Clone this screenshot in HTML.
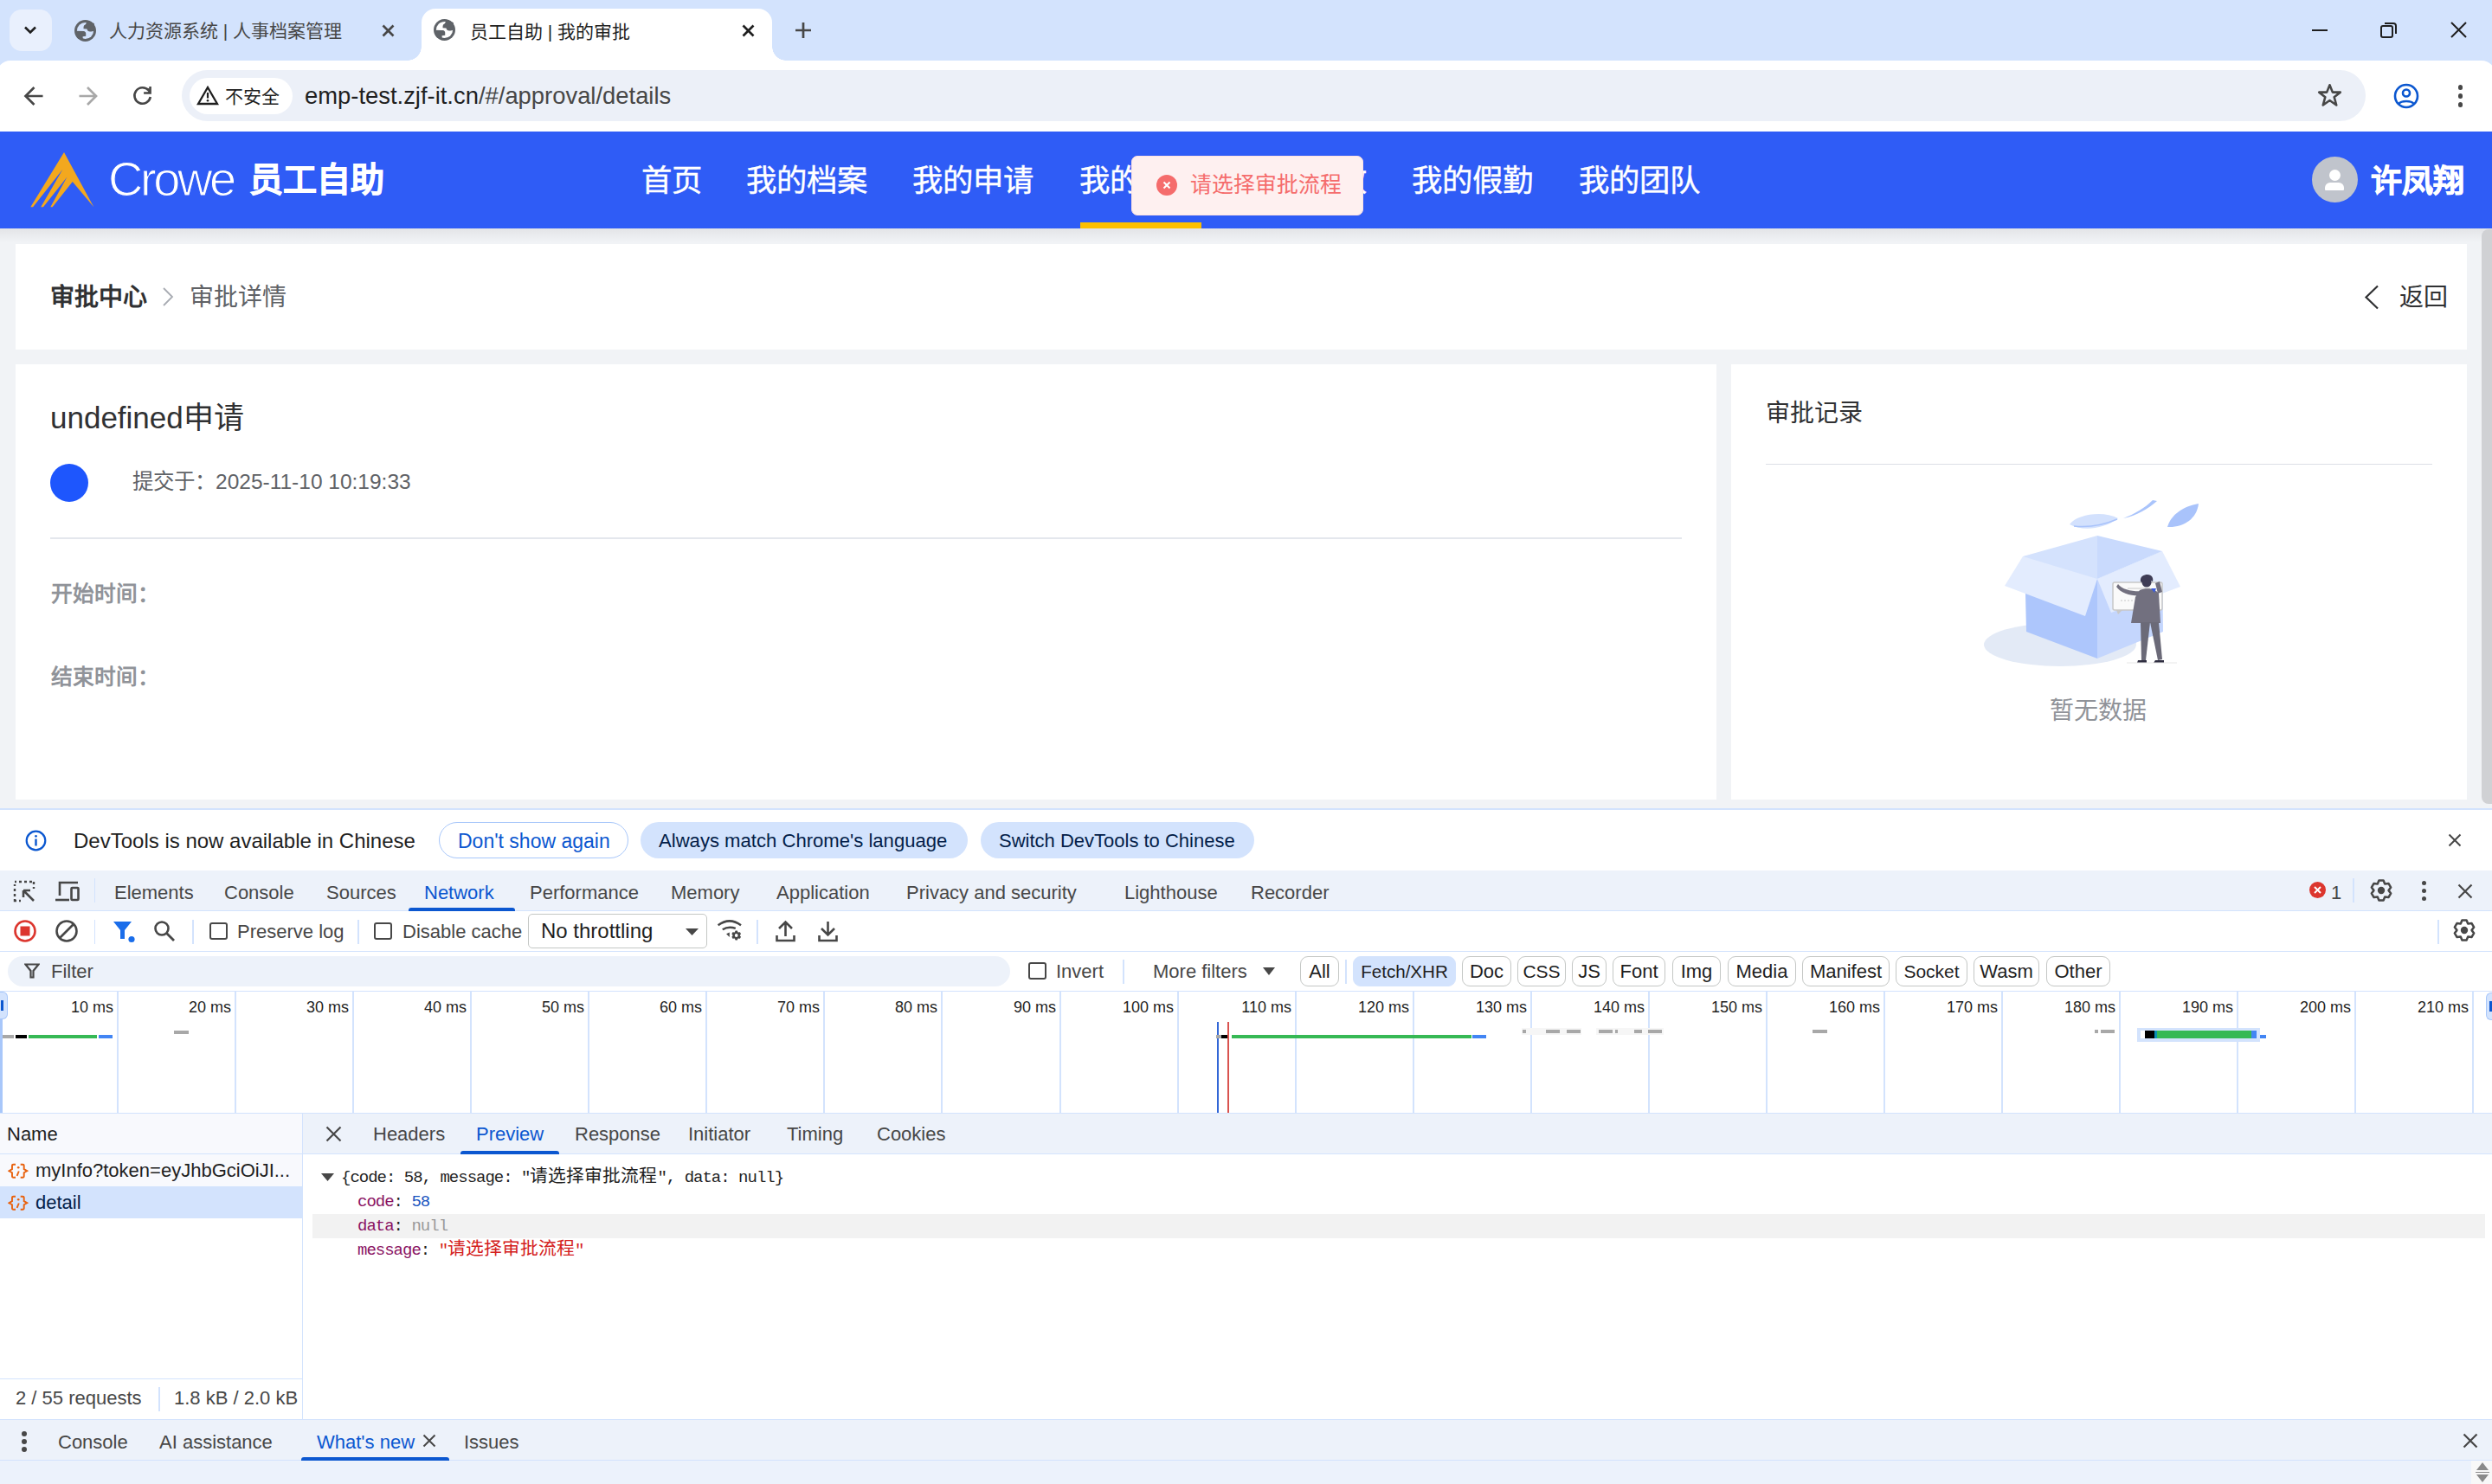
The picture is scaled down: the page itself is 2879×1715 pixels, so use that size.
<!DOCTYPE html>
<html lang="zh-CN">
<head>
<meta charset="utf-8">
<style>
*{box-sizing:border-box;margin:0;padding:0}
html,body{width:2879px;height:1715px;overflow:hidden;background:#fff}
body{font-family:"Liberation Sans",sans-serif;position:relative;color:#1f1f1f}
.a{position:absolute}
.nw{white-space:nowrap}
svg{display:block}
.dt{font-size:22px;line-height:30px;color:#474747}
.cb{width:21px;height:20px;border:2px solid #474747;border-radius:3px}
.chip{top:1105px;height:35px;border:1px solid #c4c7c5;border-radius:9px;font-size:22px;line-height:33px;color:#1f1f1f;text-align:center;white-space:nowrap}
.mono{font-family:"Liberation Mono",monospace;font-size:19px;letter-spacing:-1px;line-height:28px;color:#1f1f1f}
.cj{font-size:20.8px;letter-spacing:0}
.tl{top:1152px;font-size:18px;line-height:24px;color:#1f1f1f}
</style>
</head>
<body>
<!-- ============ TAB STRIP ============ -->
<div class="a" style="left:0;top:0;width:2879px;height:90px;background:#d3e3fd"></div>
<div class="a" style="left:11px;top:11px;width:49px;height:48px;border-radius:14px;background:#e9f0fd"></div>
<svg class="a" style="left:27px;top:29px" width="16" height="12" viewBox="0 0 16 12"><path d="M2 2.5 L8 8.5 L14 2.5" fill="none" stroke="#1f1f1f" stroke-width="2.6"/></svg>

<!-- inactive tab -->
<svg class="a" style="left:86px;top:23px" width="25" height="25" viewBox="0 0 24 24"><circle cx="12" cy="12" r="12" fill="#5f6368"/><circle cx="12" cy="12" r="9.2" fill="#d3e3fd"/><path d="M13.9 1.5 C13 4.3 12.6 5.1 11.6 5.5 C10.3 6 10.1 7.2 10.1 9.8 L13.9 10 C14.2 11.6 15.4 12.9 17.3 12.9 C19 12.9 20.6 12.4 22 11.9 L22 4 L16 1Z" fill="#5f6368"/><path d="M1.5 12.3 L10.2 12.4 C11.8 12.6 12.7 13.8 12.7 15 L12.7 17.9 L9.2 18.4 L9.4 22.5 L3 20 L1 15Z" fill="#5f6368"/></svg>
<div class="a nw" style="left:126px;top:21px;font-size:21px;line-height:30px;color:#474747">人力资源系统 | 人事档案管理</div>
<svg class="a" style="left:441px;top:28px" width="15" height="15" viewBox="0 0 15 15"><path d="M1.5 1.5L13.5 13.5M13.5 1.5L1.5 13.5" stroke="#474747" stroke-width="2.7"/></svg>

<!-- active tab -->
<div class="a" style="left:487px;top:10px;width:405px;height:62px;background:#fff;border-radius:16px 16px 0 0"></div>
<div class="a" style="left:471px;top:54px;width:16px;height:16px;background:radial-gradient(circle at 0 0,#d3e3fd 15.5px,#fff 16px)"></div>
<div class="a" style="left:892px;top:54px;width:16px;height:16px;background:radial-gradient(circle at 100% 0,#d3e3fd 15.5px,#fff 16px)"></div>
<svg class="a" style="left:501px;top:22px" width="25" height="25" viewBox="0 0 24 24"><circle cx="12" cy="12" r="12" fill="#5f6368"/><circle cx="12" cy="12" r="9.2" fill="#fff"/><path d="M13.9 1.5 C13 4.3 12.6 5.1 11.6 5.5 C10.3 6 10.1 7.2 10.1 9.8 L13.9 10 C14.2 11.6 15.4 12.9 17.3 12.9 C19 12.9 20.6 12.4 22 11.9 L22 4 L16 1Z" fill="#5f6368"/><path d="M1.5 12.3 L10.2 12.4 C11.8 12.6 12.7 13.8 12.7 15 L12.7 17.9 L9.2 18.4 L9.4 22.5 L3 20 L1 15Z" fill="#5f6368"/></svg>
<div class="a nw" style="left:543px;top:21.5px;font-size:21px;line-height:30px;color:#1f1f1f">员工自助 | 我的审批</div>
<svg class="a" style="left:857px;top:28px" width="15" height="15" viewBox="0 0 15 15"><path d="M1.5 1.5L13.5 13.5M13.5 1.5L1.5 13.5" stroke="#1f1f1f" stroke-width="2.7"/></svg>
<svg class="a" style="left:918px;top:25px" width="20" height="20" viewBox="0 0 20 20"><path d="M10 1V19M1 10H19" stroke="#474747" stroke-width="2.7"/></svg>

<!-- window controls -->
<div class="a" style="left:2671px;top:34px;width:18px;height:2px;background:#1f1f1f"></div>
<svg class="a" style="left:2750px;top:25px" width="20" height="19" viewBox="0 0 20 19"><rect x="1" y="5" width="13" height="13" rx="2" fill="none" stroke="#1f1f1f" stroke-width="2"/><path d="M5 2 H15 A3 3 0 0 1 18 5 V14" fill="none" stroke="#1f1f1f" stroke-width="2"/></svg>
<svg class="a" style="left:2831px;top:25px" width="19" height="19" viewBox="0 0 19 19"><path d="M1 1L18 18M18 1L1 18" stroke="#1f1f1f" stroke-width="2"/></svg>

<!-- ============ TOOLBAR ============ -->
<div class="a" style="left:-4px;top:70px;width:2887px;height:82px;background:#fff;border-radius:16px 16px 0 0"></div>

<svg class="a" style="left:27px;top:99px" width="24" height="24" viewBox="0 0 24 24"><path d="M22.5 12H4M12.5 2 L2.5 12 L12.5 22" fill="none" stroke="#474747" stroke-width="2.7"/></svg>
<svg class="a" style="left:90px;top:99px" width="24" height="24" viewBox="0 0 24 24"><path d="M1.5 12H20M11 2 L21 12 L11 22" fill="none" stroke="#a8a8a8" stroke-width="2.7"/></svg>
<svg class="a" style="left:153px;top:99px" width="24" height="24" viewBox="0 0 24 24"><path d="M18.75 5.5 A9.25 9.25 0 1 0 20.77 13.06" fill="none" stroke="#474747" stroke-width="2.6"/><path d="M13.1 7.2 H17.6 L19.3 4.8 V1.1 H21.85 V9.75 H13.1Z" fill="#474747"/><path d="M17 4 L19.6 2.5 L19.6 8 Z" fill="#474747"/></svg>

<div class="a" style="left:210px;top:81px;width:2523px;height:59px;border-radius:30px;background:#ecf0f8"></div>
<div class="a" style="left:219px;top:90px;width:119px;height:42px;border-radius:21px;background:#fff"></div>
<svg class="a" style="left:227px;top:99px" width="26" height="23" viewBox="0 0 26 23"><path d="M13 2L24 21H2Z" fill="none" stroke="#1f1f1f" stroke-width="2.3" stroke-linejoin="miter"/><path d="M13 8V14.5" stroke="#1f1f1f" stroke-width="2.2"/><circle cx="13" cy="17.3" r="1.3" fill="#1f1f1f"/></svg>
<div class="a nw" style="left:260px;top:97px;font-size:21px;line-height:30px;color:#1f1f1f">不安全</div>
<div class="a nw" style="left:352px;top:93px;font-size:27.4px;line-height:36px;color:#1f1f1f">emp-test.zjf-it.cn<span style="color:#474747">/#/approval/details</span></div>
<svg class="a" style="left:2676px;top:95px" width="31" height="31" viewBox="0 0 24 24"><path d="M12 2.5L14.6 9H21.5L16 13.3L18 20.5L12 16.3L6 20.5L8 13.3L2.5 9H9.4Z" fill="none" stroke="#474747" stroke-width="2" stroke-linejoin="round"/></svg>
<svg class="a" style="left:2765px;top:96px" width="30" height="30" viewBox="0 0 30 30"><circle cx="15" cy="15" r="13" fill="none" stroke="#0b57d0" stroke-width="2.6"/><circle cx="15" cy="11.5" r="4" fill="none" stroke="#0b57d0" stroke-width="2.6"/><path d="M6.5 24C9 20 21 20 23.5 24" fill="none" stroke="#0b57d0" stroke-width="2.6"/></svg>
<div class="a" style="left:2839.7px;top:98.2px;width:5.5px;height:5.5px;border-radius:3px;background:#474747"></div>
<div class="a" style="left:2839.7px;top:108.2px;width:5.5px;height:5.5px;border-radius:3px;background:#474747"></div>
<div class="a" style="left:2839.7px;top:118.2px;width:5.5px;height:5.5px;border-radius:3px;background:#474747"></div>

<!-- PAGE_START -->
<!-- ============ HEADER ============ -->
<div class="a" style="left:0;top:152px;width:2879px;height:112px;background:#2f5cf6"></div>
<div class="a" style="left:0;top:264px;width:2879px;height:671px;background:#f1f3f6"></div>
<div class="a" style="left:0;top:264px;width:2879px;height:16px;background:linear-gradient(#e3e4e7,#f1f3f6)"></div>
<!-- logo -->
<svg class="a" style="left:30px;top:170px" width="85" height="75" viewBox="0 0 85 75"><path d="M44 6.1 L78.3 69.2 L53.8 39.9 L30.6 69.2 L28.3 69.2 L47.5 34.4 L20 69.2 L17.2 69.2 L42.4 25.8 L8.1 69.2 L5.3 69.2Z" fill="#f3a81e"/></svg>
<div class="a nw" style="left:125px;top:175px;font-size:56px;line-height:64px;color:#fff;letter-spacing:-3.4px;-webkit-text-stroke:1.1px #2f5cf6">Crowe</div>
<div class="a nw" style="left:288px;top:182px;font-size:39px;line-height:52px;color:#fff;font-weight:900;-webkit-text-stroke:0.8px #fff">员工自助</div>
<!-- nav -->
<div class="a nw" style="left:741px;top:184px;font-size:35.4px;line-height:50px;color:#fff;-webkit-text-stroke:0.4px #fff">首页</div>
<div class="a nw" style="left:862px;top:184px;font-size:35.4px;line-height:50px;color:#fff;-webkit-text-stroke:0.4px #fff">我的档案</div>
<div class="a nw" style="left:1054px;top:184px;font-size:35.4px;line-height:50px;color:#fff;-webkit-text-stroke:0.4px #fff">我的申请</div>
<div class="a nw" style="left:1247px;top:184px;font-size:35.4px;line-height:50px;color:#fff;-webkit-text-stroke:0.4px #fff">我的审批</div>
<div class="a nw" style="left:1439px;top:184px;font-size:35.4px;line-height:50px;color:#fff;-webkit-text-stroke:0.4px #fff">我的绩效</div>
<div class="a nw" style="left:1631px;top:184px;font-size:35.4px;line-height:50px;color:#fff;-webkit-text-stroke:0.4px #fff">我的假勤</div>
<div class="a nw" style="left:1824px;top:184px;font-size:35.4px;line-height:50px;color:#fff;-webkit-text-stroke:0.4px #fff">我的团队</div>
<div class="a" style="left:1248px;top:257px;width:140px;height:7px;background:#fcbf00"></div>
<!-- avatar -->
<div class="a" style="left:2671px;top:181px;width:53px;height:53px;border-radius:50%;background:#c0c4cc"></div>
<div class="a" style="left:2691px;top:196px;width:13px;height:13px;border-radius:50%;background:#fff"></div>
<div class="a" style="left:2686px;top:211px;width:22px;height:9px;border-radius:6px 6px 1px 1px;background:#fff"></div>
<div class="a nw" style="left:2739px;top:185px;font-size:36px;line-height:50px;color:#fff;font-weight:900;-webkit-text-stroke:0.8px #fff">许凤翔</div>
<!-- toast -->
<div class="a" style="left:1307px;top:180px;width:268px;height:69px;border-radius:7px;background:#fef0f0;border:1px solid #fde2e2"></div>
<div class="a" style="left:1336px;top:202px;width:24px;height:24px;border-radius:50%;background:#f56c6c"></div>
<svg class="a" style="left:1336px;top:202px" width="24" height="24" viewBox="0 0 24 24"><path d="M8.5 8.5L15.5 15.5M15.5 8.5L8.5 15.5" stroke="#fff" stroke-width="2"/></svg>
<div class="a nw" style="left:1375px;top:197px;font-size:24.8px;line-height:34px;color:#f56c6c">请选择审批流程</div>

<!-- ============ PAGE ============ -->
<div class="a" style="left:18px;top:282px;width:2832px;height:122px;background:#fff"></div>
<div class="a nw" style="left:58px;top:325px;font-size:28px;line-height:38px;color:#303133;font-weight:bold">审批中心</div>
<svg class="a" style="left:187px;top:332px" width="14" height="22" viewBox="0 0 14 22"><path d="M2 1L12 11L2 21" fill="none" stroke="#a8abb2" stroke-width="1.8"/></svg>
<div class="a nw" style="left:219px;top:325px;font-size:28px;line-height:38px;color:#606266">审批详情</div>
<svg class="a" style="left:2731px;top:329px" width="18" height="29" viewBox="0 0 18 29"><path d="M16 1.5L2.5 14.5L16 27.5" fill="none" stroke="#303133" stroke-width="2.2"/></svg>
<div class="a nw" style="left:2772px;top:325px;font-size:28px;line-height:38px;color:#303133">返回</div>

<div class="a" style="left:18px;top:421px;width:1965px;height:503px;background:#fff"></div>
<div class="a nw" style="left:58px;top:460.5px;font-size:35px;line-height:44px;color:#303133">undefined申请</div>
<div class="a" style="left:58px;top:536px;width:44px;height:44px;border-radius:50%;background:#1e56fd"></div>
<div class="a nw" style="left:153px;top:540px;font-size:24.5px;line-height:34px;color:#606266">提交于：2025-11-10 10:19:33</div>
<div class="a" style="left:58px;top:621px;width:1885px;height:2px;background:#e4e7ed"></div>
<div class="a nw" style="left:59px;top:670px;font-size:24.7px;line-height:34px;color:#909399;font-weight:bold">开始时间：</div>
<div class="a nw" style="left:59px;top:766px;font-size:24.7px;line-height:34px;color:#909399;font-weight:bold">结束时间：</div>

<div class="a" style="left:2000px;top:421px;width:850px;height:503px;background:#fff"></div>
<div class="a nw" style="left:2040px;top:459px;font-size:28px;line-height:38px;color:#303133">审批记录</div>
<div class="a" style="left:2040px;top:536px;width:770px;height:1px;background:#dcdfe6"></div>
<svg class="a" style="left:2280px;top:570px" width="280" height="210" viewBox="2280 570 280 210">
<ellipse cx="2380" cy="745" rx="88" ry="25" fill="#e3eaf6"/>
<path d="M2340 686 L2423 669 L2423 761 L2341 730Z" fill="#adc6fc"/>
<path d="M2423 669 L2498 637 L2499 730 L2423 761Z" fill="#c4d6fd"/>
<path d="M2337 643 L2423 619 L2423 669 L2340 686Z" fill="#d4e2fd"/>
<path d="M2423 619 L2498 637 L2423 669Z" fill="#c9dafd"/>
<path d="M2337 643 L2423 669 L2409 712 L2316 677Z" fill="#e3ecfe"/>
<path d="M2423 669 L2498 637 L2519 678 L2439 708Z" fill="#e3ecfe"/>
<path d="M2391 606 C2400 594 2430 590 2447 599 C2430 612 2405 614 2391 606Z" fill="#d3e1fd"/>
<path d="M2396 608 C2415 610 2432 606 2446 600" fill="none" stroke="#a9c3fb" stroke-width="1.5"/>
<path d="M2453 599 C2466 594 2478 587 2487 578 L2492 579 C2482 588 2468 596 2453 599Z" fill="#aac4fb"/>
<path d="M2504 609 C2508 595 2522 585 2540 582 C2538 600 2522 610 2504 609Z" fill="#a9c3fb"/>
<rect x="2441" y="673" width="57" height="32" rx="2" fill="#fafafa" stroke="#c8c8c8" stroke-width="1.5"/>
<path d="M2445 705 L2447 710 L2452 705Z" fill="#c8c8c8"/>
<path d="M2458 680 H2484" stroke="#d8d8d8" stroke-width="1.5"/>
<path d="M2450 694 H2464" stroke="#d8d8d8" stroke-width="1.5" stroke-dasharray="2 2"/>
<path d="M2447 675 C2452 682 2465 684 2477 683 L2477 688 C2465 690 2450 686 2445 678Z" fill="#72707f"/>
<path d="M2472 682 C2480 679 2490 680 2494 686 L2496 720 L2462 720 L2467 690Z" fill="#72707f"/>
<path d="M2495 672 L2498 684 L2493 686 L2490 674Z" fill="#72707f"/>
<circle cx="2480" cy="673" r="5.5" fill="#3f3d56"/><path d="M2473 672 C2472 666 2477 664 2481 664 C2486 664 2488 668 2487 672 L2483 670 C2480 669 2477 670 2476 674Z" fill="#3f3d56"/>
<path d="M2485 680 L2491 680 L2489 685Z" fill="#3b5bdb"/>
<path d="M2473 719 L2484 719 L2479 763 L2474 763Z" fill="#6b6a78"/>
<path d="M2484 719 L2494 719 L2498 762 L2493 763Z" fill="#6b6a78"/>
<path d="M2470 763 H2480 V766 H2469Z" fill="#2f2e41"/>
<path d="M2490 763 H2500 V766 H2488Z" fill="#2f2e41"/>
<path d="M2457 766 H2515" stroke="#e6e6e6" stroke-width="1"/>
</svg>
<div class="a nw" style="left:2368px;top:803px;font-size:28px;line-height:38px;color:#909399">暂无数据</div>
<!-- page scrollbar -->
<div class="a" style="left:2867px;top:265px;width:12px;height:664px;border-radius:8px 0 0 8px;background:#d0d1d4"></div>
<!-- PAGE_END -->

<!-- DEVTOOLS_START -->
<!-- ============ DEVTOOLS ============ -->
<div class="a" style="left:0;top:934px;width:2879px;height:2px;background:#d3e3fd"></div>
<div class="a" style="left:0;top:936px;width:2879px;height:70px;background:#fff"></div>
<svg class="a" style="left:29px;top:959px" width="25" height="25" viewBox="0 0 25 25"><circle cx="12.5" cy="12.5" r="10.8" fill="none" stroke="#0b57d0" stroke-width="2.2"/><rect x="11.3" y="10.5" width="2.4" height="8" fill="#0b57d0"/><circle cx="12.5" cy="7.3" r="1.4" fill="#0b57d0"/></svg>
<div class="a nw" style="left:85px;top:957px;font-size:24px;line-height:30px;color:#1f1f1f">DevTools is now available in Chinese</div>
<div class="a nw" style="left:507px;top:950px;width:219px;height:42px;border-radius:21px;border:1.5px solid #a8c7fa"></div>
<div class="a nw" style="left:529px;top:957px;font-size:23px;line-height:30px;color:#0b57d0">Don't show again</div>
<div class="a" style="left:740px;top:950px;width:378px;height:42px;border-radius:21px;background:#d3e3fd"></div>
<div class="a nw" style="left:761px;top:957px;font-size:22.1px;line-height:30px;color:#041e49">Always match Chrome's language</div>
<div class="a" style="left:1133px;top:950px;width:316px;height:42px;border-radius:21px;background:#d3e3fd"></div>
<div class="a nw" style="left:1154px;top:957px;font-size:22px;line-height:30px;color:#041e49">Switch DevTools to Chinese</div>
<svg class="a" style="left:2828px;top:963px" width="16" height="16" viewBox="0 0 16 16"><path d="M1.5 1.5L14.5 14.5M14.5 1.5L1.5 14.5" stroke="#474747" stroke-width="2"/></svg>

<!-- main tabs -->
<div class="a" style="left:0;top:1006px;width:2879px;height:46px;background:#edf2fa"></div>
<div class="a" style="left:0;top:1052px;width:2879px;height:1px;background:#d3e3fd"></div>
<svg class="a" style="left:15px;top:1017px" width="27" height="26" viewBox="0 0 27 26"><path d="M2 2H4M7 2H10M13 2H16M19 2H22M24 2V5M24 8V10M2 5V7M2 10V13M2 16V19M2 22V24H4M7 24H9" fill="none" stroke="#474747" stroke-width="2.4"/><path d="M12 12L24 24M12 12V20M12 12H20" fill="none" stroke="#474747" stroke-width="2.6"/></svg>
<svg class="a" style="left:63px;top:1017px" width="30" height="26" viewBox="0 0 30 26"><path d="M6 18V3H27" fill="none" stroke="#474747" stroke-width="2.6"/><path d="M1 23H17" stroke="#474747" stroke-width="2.6"/><rect x="19.5" y="9" width="8" height="14" rx="1" fill="none" stroke="#474747" stroke-width="2.6"/></svg>
<div class="a" style="left:109px;top:1015px;width:1px;height:28px;background:#d3e3fd"></div>
<div class="a nw dt" style="left:132px;top:1016.5px">Elements</div>
<div class="a nw dt" style="left:259px;top:1016.5px">Console</div>
<div class="a nw dt" style="left:377px;top:1016.5px">Sources</div>
<div class="a nw dt" style="left:490px;top:1016.5px;color:#0b57d0">Network</div>
<div class="a" style="left:472px;top:1049px;width:123px;height:4px;border-radius:3px 3px 0 0;background:#0b57d0"></div>
<div class="a nw dt" style="left:612px;top:1016.5px">Performance</div>
<div class="a nw dt" style="left:775px;top:1016.5px">Memory</div>
<div class="a nw dt" style="left:897px;top:1016.5px">Application</div>
<div class="a nw dt" style="left:1047px;top:1016.5px">Privacy and security</div>
<div class="a nw dt" style="left:1299px;top:1016.5px">Lighthouse</div>
<div class="a nw dt" style="left:1445px;top:1016.5px">Recorder</div>
<div class="a" style="left:2668px;top:1019px;width:19px;height:19px;border-radius:50%;background:#dc362e"></div>
<svg class="a" style="left:2668px;top:1019px" width="19" height="19" viewBox="0 0 19 19"><path d="M6 6L13 13M13 6L6 13" stroke="#fff" stroke-width="2"/></svg>
<div class="a nw dt" style="left:2693px;top:1016.5px">1</div>
<div class="a" style="left:2718px;top:1015px;width:2px;height:28px;background:#d3e3fd"></div>
<svg class="a" style="left:2737px;top:1015px" width="28" height="28" viewBox="0 0 28 28"><path d="M9.80 6.50 L11.40 2.59 L16.60 2.59 L18.20 6.50 L18.40 6.61 L22.58 6.04 L25.18 10.55 L22.60 13.88 L22.60 14.12 L25.18 17.45 L22.58 21.96 L18.40 21.39 L18.20 21.50 L16.60 25.41 L11.40 25.41 L9.80 21.50 L9.60 21.39 L5.42 21.96 L2.82 17.45 L5.40 14.12 L5.40 13.88 L2.82 10.55 L5.42 6.04 L9.60 6.61Z" fill="none" stroke="#474747" stroke-width="2.5" stroke-linejoin="round"/><circle cx="14" cy="14" r="4.2" fill="#474747"/></svg>
<div class="a" style="left:2797.7px;top:1017.8px;width:5.4px;height:5.4px;border-radius:3px;background:#474747"></div>
<div class="a" style="left:2797.7px;top:1026.8px;width:5.4px;height:5.4px;border-radius:3px;background:#474747"></div>
<div class="a" style="left:2797.7px;top:1035.8px;width:5.4px;height:5.4px;border-radius:3px;background:#474747"></div>
<svg class="a" style="left:2839px;top:1021px" width="18" height="18" viewBox="0 0 18 18"><path d="M1.5 1.5L16.5 16.5M16.5 1.5L1.5 16.5" stroke="#474747" stroke-width="2.2"/></svg>

<!-- toolbar -->
<div class="a" style="left:0;top:1099px;width:2879px;height:1px;background:#d3e3fd"></div>
<svg class="a" style="left:15px;top:1062px" width="28" height="28" viewBox="0 0 28 28"><circle cx="14" cy="14" r="11.5" fill="none" stroke="#dc362e" stroke-width="2.6"/><rect x="8.5" y="8.5" width="11" height="11" fill="#dc362e"/></svg>
<svg class="a" style="left:63px;top:1062px" width="28" height="28" viewBox="0 0 28 28"><circle cx="14" cy="14" r="11.5" fill="none" stroke="#474747" stroke-width="2.6"/><path d="M6 22L22 6" stroke="#474747" stroke-width="2.6"/></svg>
<div class="a" style="left:109px;top:1063px;width:1px;height:28px;background:#d3e3fd"></div>
<svg class="a" style="left:130px;top:1064px" width="27" height="26" viewBox="0 0 27 26"><path d="M1 1H22L14 11V21L9 21V11Z" fill="#1a6dea"/><circle cx="22" cy="21.5" r="3.6" fill="#1a6dea"/></svg>
<svg class="a" style="left:177px;top:1063px" width="26" height="26" viewBox="0 0 26 26"><circle cx="10" cy="10" r="7.5" fill="none" stroke="#474747" stroke-width="2.6"/><path d="M15.5 15.5L24 24" stroke="#474747" stroke-width="2.8"/></svg>
<div class="a" style="left:222px;top:1063px;width:2px;height:28px;background:#d3e3fd"></div>
<div class="a cb" style="left:242px;top:1066px"></div>
<div class="a nw dt" style="left:274px;top:1062px">Preserve log</div>
<div class="a" style="left:413px;top:1063px;width:2px;height:28px;background:#d3e3fd"></div>
<div class="a cb" style="left:432px;top:1066px"></div>
<div class="a nw dt" style="left:465px;top:1062px">Disable cache</div>
<div class="a" style="left:610px;top:1056px;width:207px;height:40px;border-radius:5px;border:1px solid #c4c7c5"></div>
<div class="a nw dt" style="left:625px;top:1061px;color:#1f1f1f;font-size:24px">No throttling</div>
<svg class="a" style="left:792px;top:1073px" width="15" height="8" viewBox="0 0 15 8"><path d="M0 0H15L7.5 8Z" fill="#474747"/></svg>
<svg class="a" style="left:828px;top:1063px" width="30" height="26" viewBox="0 0 30 26"><path d="M1.6 6.2 Q14.8 -3.5 28 6.2" fill="none" stroke="#474747" stroke-width="2.5"/><path d="M6.8 11.3 Q13.5 6.8 21.8 9.9" fill="none" stroke="#474747" stroke-width="2.5"/><path d="M11.1 16.3 L14.8 14.4 L14.8 20Z" fill="#474747"/><path d="M20.80 14.48 L21.60 12.51 L23.80 12.51 L24.60 14.48 L24.80 14.59 L26.91 14.30 L28.01 16.21 L26.70 17.89 L26.70 18.11 L28.01 19.79 L26.91 21.70 L24.80 21.41 L24.60 21.52 L23.80 23.49 L21.60 23.49 L20.80 21.52 L20.60 21.41 L18.49 21.70 L17.39 19.79 L18.70 18.11 L18.70 17.89 L17.39 16.21 L18.49 14.30 L20.60 14.59Z" fill="#474747"/><circle cx="22.7" cy="18" r="1.9" fill="#fff"/></svg>
<div class="a" style="left:874px;top:1063px;width:2px;height:28px;background:#d3e3fd"></div>
<svg class="a" style="left:896px;top:1063px" width="23" height="26" viewBox="0 0 23 26"><path d="M11.5 19V3M4 10L11.5 2.5L19 10" fill="none" stroke="#474747" stroke-width="2.6"/><path d="M1.5 18V24H21.5V18" fill="none" stroke="#474747" stroke-width="2.6"/></svg>
<svg class="a" style="left:945px;top:1063px" width="23" height="26" viewBox="0 0 23 26"><path d="M11.5 2V17M4 10L11.5 17.5L19 10" fill="none" stroke="#474747" stroke-width="2.6"/><path d="M1.5 18V24H21.5V18" fill="none" stroke="#474747" stroke-width="2.6"/></svg>
<div class="a" style="left:2816px;top:1063px;width:2px;height:28px;background:#d3e3fd"></div>
<svg class="a" style="left:2833px;top:1061px" width="28" height="28" viewBox="0 0 28 28"><path d="M9.80 6.50 L11.40 2.59 L16.60 2.59 L18.20 6.50 L18.40 6.61 L22.58 6.04 L25.18 10.55 L22.60 13.88 L22.60 14.12 L25.18 17.45 L22.58 21.96 L18.40 21.39 L18.20 21.50 L16.60 25.41 L11.40 25.41 L9.80 21.50 L9.60 21.39 L5.42 21.96 L2.82 17.45 L5.40 14.12 L5.40 13.88 L2.82 10.55 L5.42 6.04 L9.60 6.61Z" fill="none" stroke="#474747" stroke-width="2.5" stroke-linejoin="round"/><circle cx="14" cy="14" r="4.2" fill="#474747"/></svg>

<!-- filter row -->
<div class="a" style="left:0;top:1145px;width:2879px;height:1px;background:#d3e3fd"></div>
<div class="a" style="left:9px;top:1105px;width:1158px;height:35px;border-radius:18px;background:#edf2fa"></div>
<svg class="a" style="left:28px;top:1113px" width="18" height="18" viewBox="0 0 18 18"><path d="M1.5 1.5H16.5L10.5 9V16.5H7.5V9Z" fill="none" stroke="#474747" stroke-width="2.2" stroke-linejoin="miter"/></svg>
<div class="a nw dt" style="left:59px;top:1108px;color:#474747">Filter</div>
<div class="a cb" style="left:1188px;top:1112px"></div>
<div class="a nw dt" style="left:1220px;top:1108px">Invert</div>
<div class="a" style="left:1297px;top:1109px;width:2px;height:28px;background:#d3e3fd"></div>
<div class="a nw dt" style="left:1332px;top:1108px">More filters</div>
<svg class="a" style="left:1459px;top:1118px" width="14" height="9" viewBox="0 0 14 9"><path d="M0 0H14L7 9Z" fill="#474747"/></svg>
<div class="a chip" style="left:1502px;width:45px"><span>All</span></div>
<div class="a" style="left:1554px;top:1109px;width:2px;height:28px;background:#d3e3fd"></div>
<div class="a chip" style="left:1563px;width:119px;background:#d3e3fd;border-color:#d3e3fd;font-size:20.6px"><span>Fetch/XHR</span></div>
<div class="a chip" style="left:1689px;width:57px"><span>Doc</span></div>
<div class="a chip" style="left:1753px;width:56px;font-size:21px"><span>CSS</span></div>
<div class="a chip" style="left:1816px;width:40px"><span>JS</span></div>
<div class="a chip" style="left:1863px;width:61px"><span>Font</span></div>
<div class="a chip" style="left:1932px;width:56px"><span>Img</span></div>
<div class="a chip" style="left:1996px;width:79px"><span>Media</span></div>
<div class="a chip" style="left:2082px;width:101px"><span>Manifest</span></div>
<div class="a chip" style="left:2190px;width:83px;font-size:21px"><span>Socket</span></div>
<div class="a chip" style="left:2280px;width:76px"><span>Wasm</span></div>
<div class="a chip" style="left:2364px;width:74px"><span>Other</span></div>

<!-- TIMELINE -->
<div class="a" style="left:0;top:1146px;width:2879px;height:140px;background:#fff"></div>
<div class="a" style="left:135px;top:1146px;width:2px;height:140px;background:#d3e3fd"></div>
<div class="a nw tl" style="left:-69px;width:200px;text-align:right">10 ms</div>
<div class="a" style="left:271px;top:1146px;width:2px;height:140px;background:#d3e3fd"></div>
<div class="a nw tl" style="left:67px;width:200px;text-align:right">20 ms</div>
<div class="a" style="left:407px;top:1146px;width:2px;height:140px;background:#d3e3fd"></div>
<div class="a nw tl" style="left:203px;width:200px;text-align:right">30 ms</div>
<div class="a" style="left:543px;top:1146px;width:2px;height:140px;background:#d3e3fd"></div>
<div class="a nw tl" style="left:339px;width:200px;text-align:right">40 ms</div>
<div class="a" style="left:679px;top:1146px;width:2px;height:140px;background:#d3e3fd"></div>
<div class="a nw tl" style="left:475px;width:200px;text-align:right">50 ms</div>
<div class="a" style="left:815px;top:1146px;width:2px;height:140px;background:#d3e3fd"></div>
<div class="a nw tl" style="left:611px;width:200px;text-align:right">60 ms</div>
<div class="a" style="left:951px;top:1146px;width:2px;height:140px;background:#d3e3fd"></div>
<div class="a nw tl" style="left:747px;width:200px;text-align:right">70 ms</div>
<div class="a" style="left:1087px;top:1146px;width:2px;height:140px;background:#d3e3fd"></div>
<div class="a nw tl" style="left:883px;width:200px;text-align:right">80 ms</div>
<div class="a" style="left:1224px;top:1146px;width:2px;height:140px;background:#d3e3fd"></div>
<div class="a nw tl" style="left:1020px;width:200px;text-align:right">90 ms</div>
<div class="a" style="left:1360px;top:1146px;width:2px;height:140px;background:#d3e3fd"></div>
<div class="a nw tl" style="left:1156px;width:200px;text-align:right">100 ms</div>
<div class="a" style="left:1496px;top:1146px;width:2px;height:140px;background:#d3e3fd"></div>
<div class="a nw tl" style="left:1292px;width:200px;text-align:right">110 ms</div>
<div class="a" style="left:1632px;top:1146px;width:2px;height:140px;background:#d3e3fd"></div>
<div class="a nw tl" style="left:1428px;width:200px;text-align:right">120 ms</div>
<div class="a" style="left:1768px;top:1146px;width:2px;height:140px;background:#d3e3fd"></div>
<div class="a nw tl" style="left:1564px;width:200px;text-align:right">130 ms</div>
<div class="a" style="left:1904px;top:1146px;width:2px;height:140px;background:#d3e3fd"></div>
<div class="a nw tl" style="left:1700px;width:200px;text-align:right">140 ms</div>
<div class="a" style="left:2040px;top:1146px;width:2px;height:140px;background:#d3e3fd"></div>
<div class="a nw tl" style="left:1836px;width:200px;text-align:right">150 ms</div>
<div class="a" style="left:2176px;top:1146px;width:2px;height:140px;background:#d3e3fd"></div>
<div class="a nw tl" style="left:1972px;width:200px;text-align:right">160 ms</div>
<div class="a" style="left:2312px;top:1146px;width:2px;height:140px;background:#d3e3fd"></div>
<div class="a nw tl" style="left:2108px;width:200px;text-align:right">170 ms</div>
<div class="a" style="left:2448px;top:1146px;width:2px;height:140px;background:#d3e3fd"></div>
<div class="a nw tl" style="left:2244px;width:200px;text-align:right">180 ms</div>
<div class="a" style="left:2584px;top:1146px;width:2px;height:140px;background:#d3e3fd"></div>
<div class="a nw tl" style="left:2380px;width:200px;text-align:right">190 ms</div>
<div class="a" style="left:2720px;top:1146px;width:2px;height:140px;background:#d3e3fd"></div>
<div class="a nw tl" style="left:2516px;width:200px;text-align:right">200 ms</div>
<div class="a" style="left:2856px;top:1146px;width:2px;height:140px;background:#d3e3fd"></div>
<div class="a nw tl" style="left:2652px;width:200px;text-align:right">210 ms</div>
<div class="a" style="left:0;top:1146px;width:3px;height:140px;background:#a8c7fa"></div>
<div class="a" style="left:0;top:1146px;width:9px;height:32px;border-radius:0 6px 6px 0;background:#d3e3fd;border:1px solid #a8c7fa;border-left:0"></div>
<div class="a" style="left:1px;top:1156px;width:3px;height:12px;background:#0b57d0"></div>
<div class="a" style="left:2872px;top:1147px;width:7px;height:32px;border-radius:6px 0 0 6px;background:#d3e3fd;border:1px solid #a8c7fa;border-right:0"></div>
<div class="a" style="left:2876px;top:1157px;width:3px;height:12px;background:#0b57d0"></div>
<div class="a" style="left:3px;top:1196px;width:13px;height:4px;background:#a8a8a8"></div>
<div class="a" style="left:18px;top:1196px;width:13px;height:4px;background:#000"></div>
<div class="a" style="left:33px;top:1196px;width:79px;height:4px;background:#36b955"></div>
<div class="a" style="left:114px;top:1196px;width:16px;height:4px;background:#4285f4"></div>
<div class="a" style="left:201px;top:1191px;width:17px;height:4px;background:#a8a8a8"></div>
<div class="a" style="left:1406px;top:1181px;width:2px;height:105px;background:#3367d6"></div>
<div class="a" style="left:1418px;top:1181px;width:2px;height:105px;background:#d9534f"></div>
<div class="a" style="left:1405px;top:1196px;width:6px;height:4px;background:#a8a8a8"></div>
<div class="a" style="left:1411px;top:1196px;width:7px;height:4px;background:#000"></div>
<div class="a" style="left:1423px;top:1196px;width:277px;height:4px;background:#36b955"></div>
<div class="a" style="left:1701px;top:1196px;width:16px;height:4px;background:#4285f4"></div>
<div class="a" style="left:1758px;top:1188px;width:69px;height:8px;background:#f6f6f6"></div><div class="a" style="left:1844px;top:1188px;width:78px;height:8px;background:#f6f6f6"></div><div class="a" style="left:1759px;top:1190px;width:4px;height:4px;background:#a8a8a8"></div>
<div class="a" style="left:1786px;top:1190px;width:16px;height:4px;background:#a8a8a8"></div>
<div class="a" style="left:1810px;top:1190px;width:16px;height:4px;background:#a8a8a8"></div>
<div class="a" style="left:1847px;top:1190px;width:16px;height:4px;background:#a8a8a8"></div>
<div class="a" style="left:1866px;top:1190px;width:3px;height:4px;background:#a8a8a8"></div>
<div class="a" style="left:1888px;top:1190px;width:9px;height:4px;background:#a8a8a8"></div>
<div class="a" style="left:1904px;top:1190px;width:16px;height:4px;background:#a8a8a8"></div>
<div class="a" style="left:2094px;top:1190px;width:17px;height:4px;background:#a8a8a8"></div>
<div class="a" style="left:2420px;top:1190px;width:4px;height:4px;background:#a8a8a8"></div>
<div class="a" style="left:2427px;top:1190px;width:16px;height:4px;background:#a8a8a8"></div>
<div class="a" style="left:2469px;top:1188px;width:142px;height:16px;background:#d3e3fd"></div>
<div class="a" style="left:2473px;top:1191px;width:5px;height:9px;background:#fff"></div>
<div class="a" style="left:2478px;top:1191px;width:11px;height:9px;background:#000"></div>
<div class="a" style="left:2489px;top:1191px;width:3px;height:9px;background:#0a8fb5"></div>
<div class="a" style="left:2492px;top:1191px;width:109px;height:9px;background:#36b955"></div>
<div class="a" style="left:2601px;top:1191px;width:6px;height:9px;background:#4285f4"></div>
<div class="a" style="left:2611px;top:1196px;width:7px;height:4px;background:#4285f4"></div>
<div class="a" style="left:0;top:1286px;width:2879px;height:1px;background:#d3e3fd"></div>

<!-- lower split -->
<div class="a" style="left:0;top:1287px;width:350px;height:46px;background:#f8f9fd"></div>
<div class="a" style="left:350px;top:1287px;width:2529px;height:46px;background:#edf2fa"></div>
<div class="a" style="left:0;top:1333px;width:2879px;height:1px;background:#d3e3fd"></div>
<div class="a" style="left:349px;top:1287px;width:1px;height:353px;background:#d3e3fd"></div>
<div class="a nw dt" style="left:8px;top:1296px;color:#1f1f1f">Name</div>
<svg class="a" style="left:376px;top:1301px" width="19" height="19" viewBox="0 0 19 19"><path d="M1.5 1.5L17.5 17.5M17.5 1.5L1.5 17.5" stroke="#474747" stroke-width="2.2"/></svg>
<div class="a nw dt" style="left:431px;top:1296px">Headers</div>
<div class="a nw dt" style="left:550px;top:1296px;color:#0b57d0">Preview</div>
<div class="a" style="left:532px;top:1330px;width:114px;height:4px;border-radius:3px 3px 0 0;background:#0b57d0"></div>
<div class="a nw dt" style="left:664px;top:1296px">Response</div>
<div class="a nw dt" style="left:795px;top:1296px">Initiator</div>
<div class="a nw dt" style="left:909px;top:1296px">Timing</div>
<div class="a nw dt" style="left:1013px;top:1296px">Cookies</div>

<div class="a" style="left:0;top:1334px;width:349px;height:37px;background:#f8f9fd"></div><div class="a" style="left:0;top:1371px;width:349px;height:37px;background:#d3e3fd"></div>
<svg class="a" style="left:9px;top:1343px" width="24" height="22" viewBox="0 0 24 22"><path d="M9 2.7 H6.6 C5.5 2.7 5 3.2 5 4.2 V8.2 L1.4 10.2 L5 12.2 V16.3 C5 17.3 5.5 17.8 6.6 17.8 H9" fill="none" stroke="#e8620f" stroke-width="1.9"/><path d="M14.7 2.7 H17.1 C18.2 2.7 18.7 3.2 18.7 4.2 V8.2 L22.3 10.2 L18.7 12.2 V16.3 C18.7 17.3 18.2 17.8 17.1 17.8 H14.7" fill="none" stroke="#e8620f" stroke-width="1.9"/><circle cx="12.2" cy="6.3" r="1.3" fill="#e8620f"/><path d="M12.8 10.5 L10.6 15.9" stroke="#e8620f" stroke-width="1.9"/></svg>
<div class="a nw dt" style="left:41px;top:1338px;color:#1f1f1f">myInfo?token=eyJhbGciOiJI...</div>
<svg class="a" style="left:9px;top:1379.6px" width="24" height="22" viewBox="0 0 24 22"><path d="M9 2.7 H6.6 C5.5 2.7 5 3.2 5 4.2 V8.2 L1.4 10.2 L5 12.2 V16.3 C5 17.3 5.5 17.8 6.6 17.8 H9" fill="none" stroke="#e8620f" stroke-width="1.9"/><path d="M14.7 2.7 H17.1 C18.2 2.7 18.7 3.2 18.7 4.2 V8.2 L22.3 10.2 L18.7 12.2 V16.3 C18.7 17.3 18.2 17.8 17.1 17.8 H14.7" fill="none" stroke="#e8620f" stroke-width="1.9"/><circle cx="12.2" cy="6.3" r="1.3" fill="#e8620f"/><path d="M12.8 10.5 L10.6 15.9" stroke="#e8620f" stroke-width="1.9"/></svg>
<div class="a nw dt" style="left:41px;top:1375px;color:#041e49">detail</div>

<!-- preview json -->
<svg class="a" style="left:371px;top:1356px" width="15" height="9" viewBox="0 0 15 9"><path d="M0 0H15L7.5 9Z" fill="#474747"/></svg>
<div class="a" style="left:361px;top:1403px;width:2510px;height:28px;background:#f2f2f2"></div>
<div class="a nw mono" style="left:394px;top:1347px;color:#1f1f1f">{code: 58, message: "<span class="cj">请选择审批流程</span>", data<span>:</span> null}</div>
<div class="a nw mono" style="left:413px;top:1375px"><span style="color:#8a1262">code</span>: <span style="color:#1a55c0">58</span></div>
<div class="a nw mono" style="left:413px;top:1403px"><span style="color:#8a1262">data</span>: <span style="color:#999">null</span></div>
<div class="a nw mono" style="left:413px;top:1431px"><span style="color:#8a1262">message</span>: <span style="color:#d42020">"<span class="cj">请选择审批流程</span>"</span></div>

<!-- status bar -->
<div class="a" style="left:0;top:1593px;width:349px;height:1px;background:#d3e3fd"></div>
<div class="a nw dt" style="left:18px;top:1601px">2 / 55 requests</div>
<div class="a" style="left:183px;top:1603px;width:2px;height:28px;background:#d3e3fd"></div>
<div class="a nw dt" style="left:201px;top:1601px">1.8 kB / 2.0 kB</div>

<!-- drawer -->
<div class="a" style="left:0;top:1640px;width:2879px;height:1px;background:#d3e3fd"></div>
<div class="a" style="left:0;top:1641px;width:2879px;height:46px;background:#edf2fa"></div>
<div class="a" style="left:0;top:1687px;width:2879px;height:1px;background:#d3e3fd"></div>
<div class="a" style="left:0;top:1688px;width:2879px;height:27px;background:#ecf2fc"></div>
<div class="a" style="left:25px;top:1654px;width:6px;height:6px;border-radius:3px;background:#474747"></div>
<div class="a" style="left:25px;top:1663px;width:6px;height:6px;border-radius:3px;background:#474747"></div>
<div class="a" style="left:25px;top:1672px;width:6px;height:6px;border-radius:3px;background:#474747"></div>
<div class="a nw dt" style="left:67px;top:1652px">Console</div>
<div class="a nw dt" style="left:184px;top:1652px">AI assistance</div>
<div class="a nw dt" style="left:366px;top:1652px;color:#0b57d0">What's new</div>
<svg class="a" style="left:488px;top:1657px" width="16" height="16" viewBox="0 0 16 16"><path d="M1.5 1.5L14.5 14.5M14.5 1.5L1.5 14.5" stroke="#474747" stroke-width="2"/></svg>
<div class="a" style="left:348px;top:1684px;width:171px;height:4px;border-radius:3px 3px 0 0;background:#0b57d0"></div>
<div class="a nw dt" style="left:536px;top:1652px">Issues</div>
<svg class="a" style="left:2845px;top:1656px" width="18" height="18" viewBox="0 0 18 18"><path d="M1.5 1.5L16.5 16.5M16.5 1.5L1.5 16.5" stroke="#474747" stroke-width="2.2"/></svg>
<div class="a" style="left:2855px;top:1688px;width:24px;height:27px;background:#f8f8f8"></div>
<svg class="a" style="left:2860px;top:1689px" width="16" height="26" viewBox="0 0 16 26"><path d="M8 1L15 10H1Z" fill="#8a8a8a"/><path d="M0 12.5H16" stroke="#8a8a8a" stroke-width="1"/><path d="M1 15H15L8 24Z" fill="#8a8a8a"/></svg>
<!-- DEVTOOLS_END -->
</body>
</html>
